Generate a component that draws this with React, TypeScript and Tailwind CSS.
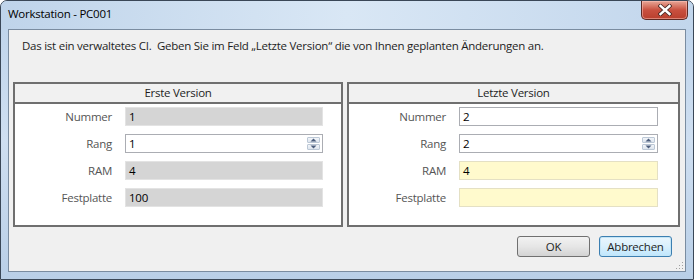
import React from 'react';

type Field = { label: string; value: string; kind: 'disabled' | 'white' | 'yellow'; spin?: boolean };

const firstVersion: Field[] = [
  { label: 'Nummer', value: '1', kind: 'disabled' },
  { label: 'Rang', value: '1', kind: 'white', spin: true },
  { label: 'RAM', value: '4', kind: 'disabled' },
  { label: 'Festplatte', value: '100', kind: 'disabled' },
];

const lastVersion: Field[] = [
  { label: 'Nummer', value: '2', kind: 'white' },
  { label: 'Rang', value: '2', kind: 'white', spin: true },
  { label: 'RAM', value: '4', kind: 'yellow' },
  { label: 'Festplatte', value: '', kind: 'yellow' },
];

const inputStyles = {
  disabled: 'bg-[#d5d5d5] border-[#e3e3e3]',
  white: 'bg-white border-[#abadb3]',
  yellow: 'bg-[#fffacd] border-[#e4e0c4]',
};

function Spinner() {
  return (
    <div className="absolute right-[2px] top-[2px] bottom-[2px] w-[13px] flex flex-col gap-px">
      {[0, 1].map((i) => (
        <div
          key={i}
          className="flex-1 flex items-center justify-center border border-[#bcc8d6] bg-gradient-to-b from-[#f2f5f9] to-[#dde5ee] rounded-[1px]"
        >
          <svg width="7" height="4" viewBox="0 0 7 4">
            {i === 0 ? <path d="M0.5 3.5 L3.5 0.5 L6.5 3.5 Z" fill="#4b5d7c" /> : <path d="M0.5 0.5 L3.5 3.5 L6.5 0.5 Z" fill="#4b5d7c" />}
          </svg>
        </div>
      ))}
    </div>
  );
}

function Panel({ title, fields, width, inputWidth }: { title: string; fields: Field[]; width: string; inputWidth: string }) {
  return (
    <div className={`${width} border-2 border-[#6f6f6f] bg-white flex flex-col`}>
      <div className="h-[20px] bg-[#f1f1f1] border-b-2 border-[#6f6f6f] flex items-center justify-center text-[11.5px] text-[#1e1e1e]">
        {title}
      </div>
      <div className="flex flex-col gap-[8px] pt-[3px] pb-[18px]">
        {fields.map((f) => (
          <div key={f.label} className="flex items-center h-[19px]">
            <div className="w-[97px] text-right text-[11.5px] text-[#555]">{f.label}</div>
            <div
              className={`relative ml-[13px] ${inputWidth} h-[19px] border ${inputStyles[f.kind]} flex items-center pl-[3px] text-[11.5px] text-black`}
            >
              {f.value}
              {f.spin && <Spinner />}
            </div>
          </div>
        ))}
      </div>
    </div>
  );
}

export default function App() {
  return (
    <div
      className="w-[694px] h-[280px] flex flex-col rounded-t-[7px] border border-[#3a4757] bg-gradient-to-b from-[#bdd3eb] via-[#cfdff1] to-[#b9cfe7] font-['Open_Sans','Noto_Sans',sans-serif] tracking-[-0.25px] overflow-hidden"
    >
      {/* Title bar */}
      <div className="h-[28px] flex items-start shrink-0 bg-gradient-to-r from-[#bfd4ea] via-[#d9e7f5] to-[#c2d6ec]">
        <div className="pl-[7px] pt-[5px] text-[11.5px] text-black leading-[16px]">Workstation - PC001</div>
        <div className="ml-auto mr-[5px] w-[47px] h-[19px] rounded-b-[5px] border border-t-0 border-[#5d2a24] bg-gradient-to-b from-[#e7a697] via-[#c9503f] to-[#b93f2d] flex items-center justify-center shadow-[inset_0_0_0_1px_rgba(255,200,190,0.5)]">
          <svg width="14" height="12" viewBox="0 0 14 12">
            <path d="M2.5 2 L11.5 10 M11.5 2 L2.5 10" stroke="#4a2a26" strokeWidth="4.2" strokeLinecap="square" />
            <path d="M2.5 2 L11.5 10 M11.5 2 L2.5 10" stroke="#ffffff" strokeWidth="2.4" strokeLinecap="square" />
          </svg>
        </div>
      </div>

      {/* Client area */}
      <div className="relative flex-1 mx-[7px] mb-[7px] border border-[#7a8ca0] bg-[#f0f0f0] flex flex-col">
        <p className="mt-[8px] pl-[13px] text-[11.5px] leading-[16px] text-[#1e1e1e]">
          Das ist ein verwaltetes CI.&nbsp; Geben Sie im Feld „Letzte Version“ die von Ihnen geplanten Änderungen an.
        </p>

        <div className="mt-[28px] pl-[4px] flex gap-[4px]">
          <Panel title="Erste Version" fields={firstVersion} width="w-[330px]" inputWidth="w-[198px]" />
          <Panel title="Letzte Version" fields={lastVersion} width="w-[333px]" inputWidth="w-[199px]" />
        </div>

        <div className="mt-[9px] pr-[13px] flex justify-end gap-[9px]">
          <button className="w-[73px] h-[21px] rounded-[3px] border border-[#707070] bg-gradient-to-b from-[#f2f2f2] via-[#e6e6e6] to-[#d3d3d3] text-[11.5px] text-[#1e1e1e] leading-none">
            OK
          </button>
          <button className="w-[73px] h-[21px] rounded-[3px] border border-[#3c7fb1] bg-gradient-to-b from-[#eaf6fd] via-[#d9f0fc] to-[#bee6fd] shadow-[inset_0_0_0_1px_#c4e5f6] text-[11.5px] text-[#1e1e1e] leading-none">
            Abbrechen
          </button>
        </div>

        {/* resize grip */}
        <svg className="absolute right-[1px] bottom-[1px]" width="10" height="10" viewBox="0 0 10 10">
          {[
            [8, 2],
            [5, 5],
            [8, 5],
            [2, 8],
            [5, 8],
            [8, 8],
          ].map(([x, y]) => (
            <rect key={`${x}-${y}`} x={x} y={y} width="1" height="1" fill="#a0a0a0" />
          ))}
        </svg>
      </div>
    </div>
  );
}
